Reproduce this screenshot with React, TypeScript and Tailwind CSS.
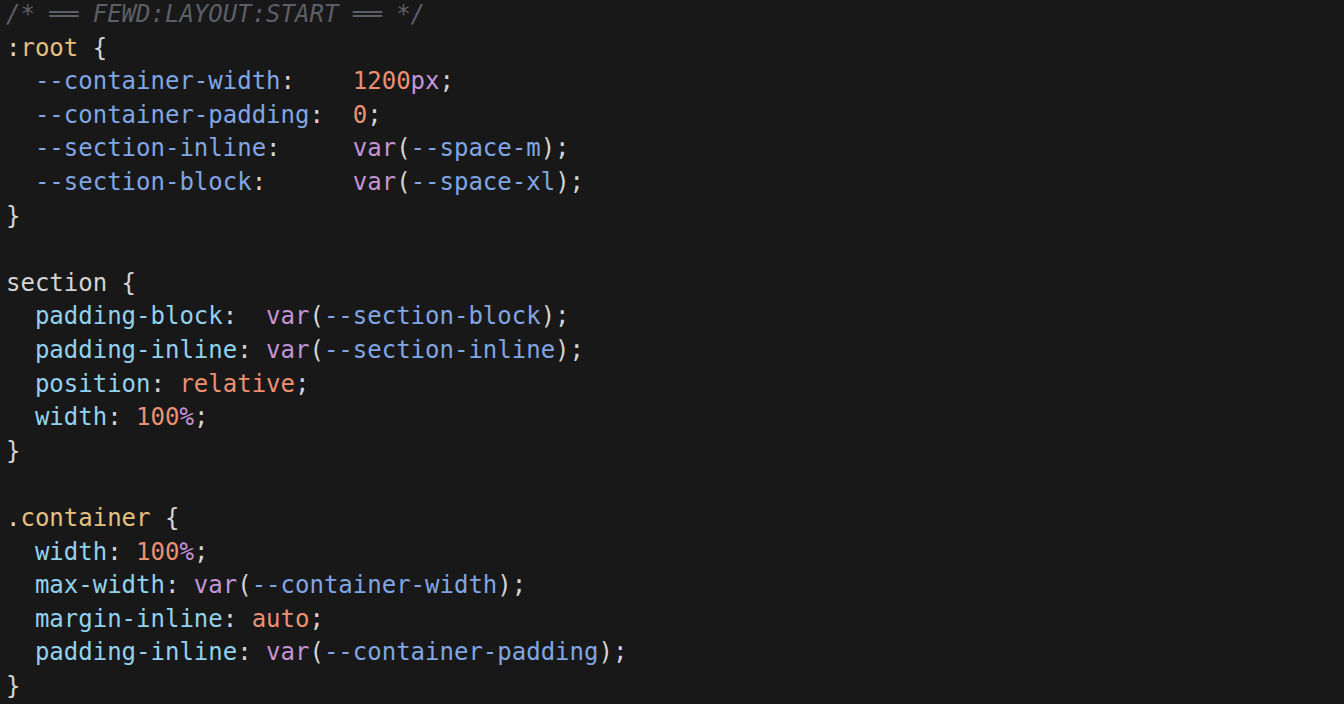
import React from "react";

type Tok = [string, string];

const P = "text-[#d4d4d4]"; // punctuation
const C = "text-[#5b5f67] italic"; // comment
const S = "text-[#e6c07e]"; // selector
const V = "text-[#80a6e4]"; // custom prop
const R = "text-[#93d2ee]"; // property
const F = "text-[#c594d6]"; // var / unit
const N = "text-[#ec9070]"; // number / keyword
const E = "text-[#d4d4d4]"; // element

const lines: Tok[][] = [
  [[C, "/* ══ FEWD:LAYOUT:START ══ */"]],
  [[P, ":"], [S, "root"], [P, " {"]],
  [[P, "  "], [V, "--container-width"], [P, ":    "], [N, "1200"], [F, "px"], [P, ";"]],
  [[P, "  "], [V, "--container-padding"], [P, ":  "], [N, "0"], [P, ";"]],
  [[P, "  "], [V, "--section-inline"], [P, ":     "], [F, "var"], [P, "("], [V, "--space-m"], [P, ");"]],
  [[P, "  "], [V, "--section-block"], [P, ":      "], [F, "var"], [P, "("], [V, "--space-xl"], [P, ");"]],
  [[P, "}"]],
  [],
  [[E, "section"], [P, " {"]],
  [[P, "  "], [R, "padding-block"], [P, ":  "], [F, "var"], [P, "("], [V, "--section-block"], [P, ");"]],
  [[P, "  "], [R, "padding-inline"], [P, ": "], [F, "var"], [P, "("], [V, "--section-inline"], [P, ");"]],
  [[P, "  "], [R, "position"], [P, ": "], [N, "relative"], [P, ";"]],
  [[P, "  "], [R, "width"], [P, ": "], [N, "100"], [F, "%"], [P, ";"]],
  [[P, "}"]],
  [],
  [[P, "."], [S, "container"], [P, " {"]],
  [[P, "  "], [R, "width"], [P, ": "], [N, "100"], [F, "%"], [P, ";"]],
  [[P, "  "], [R, "max-width"], [P, ": "], [F, "var"], [P, "("], [V, "--container-width"], [P, ");"]],
  [[P, "  "], [R, "margin-inline"], [P, ": "], [N, "auto"], [P, ";"]],
  [[P, "  "], [R, "padding-inline"], [P, ": "], [F, "var"], [P, "("], [V, "--container-padding"], [P, ");"]],
  [[P, "}"]],
];

export default function App() {
  return (
    <div className="w-[1344px] h-[704px] overflow-hidden bg-[#181818]">
      <pre
        className="m-0 -mt-[2px] pl-[6px] text-[24px] leading-[33.6px] whitespace-pre"
        style={{ fontFamily: '"DejaVu Sans Mono", "Liberation Mono", monospace' }}
      >
        {lines.map((ln, i) => (
          <div key={i} className="h-[33.6px]">
            {ln.map(([cls, t], j) => (
              <span key={j} className={cls}>
                {t}
              </span>
            ))}
          </div>
        ))}
      </pre>
    </div>
  );
}
